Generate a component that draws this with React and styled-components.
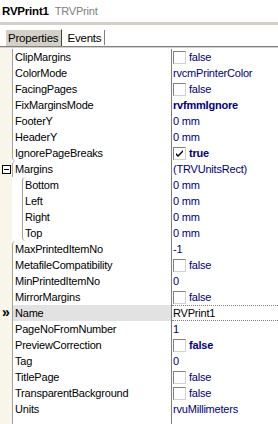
import React from "react";
import styled, { createGlobalStyle } from "styled-components";

const Global = createGlobalStyle`
  html, body { margin: 0; padding: 0; background: #ffffff; }
  body { font-family: "Liberation Sans", Arial, sans-serif; font-size: 11px; }
`;

const Root = styled.div`
  width: 278px;
  height: 424px;
  overflow: hidden;
  background: #ffffff;
  display: flex;
  flex-direction: column;
  letter-spacing: -0.2px;
`;

const TitleBar = styled.div`
  height: 22px;
  display: flex;
  align-items: center;
  padding-left: 2px;
  gap: 6px;
  box-sizing: border-box;
`;

const TitleName = styled.span`
  font-weight: bold;
  color: #000000;
  font-size: 11.5px;
`;

const TitleClass = styled.span`
  color: #808080;
  font-size: 11px;
`;

const TabArea = styled.div`
  border-top: 3px solid #d4d0c8;
  height: 21px;
  display: flex;
  align-items: flex-end;
  padding-left: 5px;
  border-bottom: 1px solid #808080;
  box-sizing: content-box;
`;

const Tab = styled.div`
  height: ${(p) => (p.$active ? "17px" : "15px")};
  padding: 0 3px 0 2px;
  display: flex;
  align-items: center;
  color: #000;
  font-size: 11.5px;
  box-sizing: border-box;
  ${(p) =>
    p.$active
      ? `background:#d4d0c8; border-top:1px solid #ffffff; border-left:1px solid #ffffff; border-right:1px solid #404040;`
      : `border-right:1px solid #808080; margin: 0 0 1px 1px; padding-left: 4px;`}
`;

const Grid = styled.div`
  flex: 1;
  border-top: 1px solid #d4d0c8;
  padding-top: 1px;
  display: flex;
  flex-direction: column;
  background: linear-gradient(to right, #f8f5ea 0 12px, #ffffff 12px);
`;

const Row = styled.div`
  height: 16px;
  display: grid;
  grid-template-columns: 12px 160px 1fr;
`;

const Gutter = styled.div`
  background: #f8f5ea;
  display: flex;
  align-items: center;
  justify-content: center;
`;

const NameCell = styled.div`
  display: flex;
  align-items: center;
  background: ${(p) => (p.$selected ? "#e2e2e2" : "#ffffff")};
  box-sizing: border-box;
  border-right: 1px solid #808080;
  color: #000;
  padding-left: ${(p) => (p.$sub ? "10px" : "0")};
  background-clip: content-box;
`;

const NameInner = styled.div`
  flex: 1;
  height: 100%;
  display: flex;
  align-items: center;
  padding-left: 2px;
  border-left: 1px solid #a0a0a0;
  border-top-left-radius: ${(p) => (p.$rt ? "4px" : "0")};
  border-bottom-left-radius: ${(p) => (p.$rb ? "4px" : "0")};
  box-sizing: border-box;
  white-space: nowrap;
  overflow: hidden;
`;

const ValueCell = styled.div`
  display: flex;
  align-items: center;
  gap: 3px;
  padding-left: 1px;
  box-sizing: border-box;
  color: ${(p) => (p.$selected ? "#000000" : "#000080")};
  font-weight: ${(p) => (p.$bold ? "bold" : "normal")};
  white-space: nowrap;
  ${(p) =>
    p.$selected
      ? `border-top:1px dotted #808080; border-bottom:1px dotted #808080;`
      : ""}
`;

const Check = styled.span`
  width: 13px;
  height: 13px;
  box-sizing: border-box;
  border-top: 1px solid #808080;
  border-left: 1px solid #808080;
  border-right: 1px solid #d4d0c8;
  border-bottom: 1px solid #d4d0c8;
  background: #ffffff;
  display: inline-flex;
  align-items: center;
  justify-content: center;
  flex: none;
`;

const Expander = styled.span`
  width: 9px;
  height: 9px;
  box-sizing: border-box;
  border: 1px solid #000;
  position: relative;
  background: #fff;
  &::after {
    content: "";
    position: absolute;
    left: 1px;
    right: 1px;
    top: 3px;
    height: 1px;
    background: #000;
  }
`;

const Marker = styled.span`
  font-weight: bold;
  font-size: 14px;
  letter-spacing: 0;
  line-height: 1;
  margin-top: -2px;
`;

const rows = [
  { n: "ClipMargins", v: "false", cb: false },
  { n: "ColorMode", v: "rvcmPrinterColor" },
  { n: "FacingPages", v: "false", cb: false },
  { n: "FixMarginsMode", v: "rvfmmIgnore", b: true },
  { n: "FooterY", v: "0 mm" },
  { n: "HeaderY", v: "0 mm" },
  { n: "IgnorePageBreaks", v: "true", cb: true, b: true, rb: true },
  { n: "Margins", v: "(TRVUnitsRect)", exp: true, rt: true },
  { n: "Bottom", v: "0 mm", sub: true, rt: true },
  { n: "Left", v: "0 mm", sub: true },
  { n: "Right", v: "0 mm", sub: true },
  { n: "Top", v: "0 mm", sub: true, rb: true },
  { n: "MaxPrintedItemNo", v: "-1", rt: true },
  { n: "MetafileCompatibility", v: "false", cb: false },
  { n: "MinPrintedItemNo", v: "0" },
  { n: "MirrorMargins", v: "false", cb: false },
  { n: "Name", v: "RVPrint1", sel: true },
  { n: "PageNoFromNumber", v: "1" },
  { n: "PreviewCorrection", v: "false", cb: false, b: true },
  { n: "Tag", v: "0" },
  { n: "TitlePage", v: "false", cb: false },
  { n: "TransparentBackground", v: "false", cb: false },
  { n: "Units", v: "rvuMillimeters" },
];

const CheckMark = () => (
  <svg width="9" height="9" viewBox="0 0 9 9">
    <path d="M1 4 L3 6 L8 1 L8 3 L3 8 L1 6 Z" fill="#000" />
  </svg>
);

const Filler = styled.div`
  flex: 1;
  display: grid;
  grid-template-columns: 12px 160px 1fr;
`;

const FillName = styled.div`
  border-left: 1px solid #a0a0a0;
  border-right: 1px solid #808080;
`;

export default function App() {
  return (
    <>
      <Global />
      <Root>
        <TitleBar>
          <TitleName>RVPrint1</TitleName>
          <TitleClass>TRVPrint</TitleClass>
        </TitleBar>
        <TabArea>
          <Tab $active>Properties</Tab>
          <Tab>Events</Tab>
        </TabArea>
        <Grid>
          {rows.map((r) => (
            <Row key={r.n}>
              <Gutter>
                {r.exp && <Expander />}
                {r.sel && <Marker>»</Marker>}
              </Gutter>
              <NameCell $selected={r.sel} $sub={r.sub}>
                <NameInner $rt={r.rt} $rb={r.rb}>{r.n}</NameInner>
              </NameCell>
              <ValueCell $selected={r.sel} $bold={r.b}>
                {r.cb !== undefined && <Check>{r.cb && <CheckMark />}</Check>}
                {r.v}
              </ValueCell>
            </Row>
          ))}
          <Filler>
            <div />
            <FillName />
            <div />
          </Filler>
        </Grid>
      </Root>
    </>
  );
}
